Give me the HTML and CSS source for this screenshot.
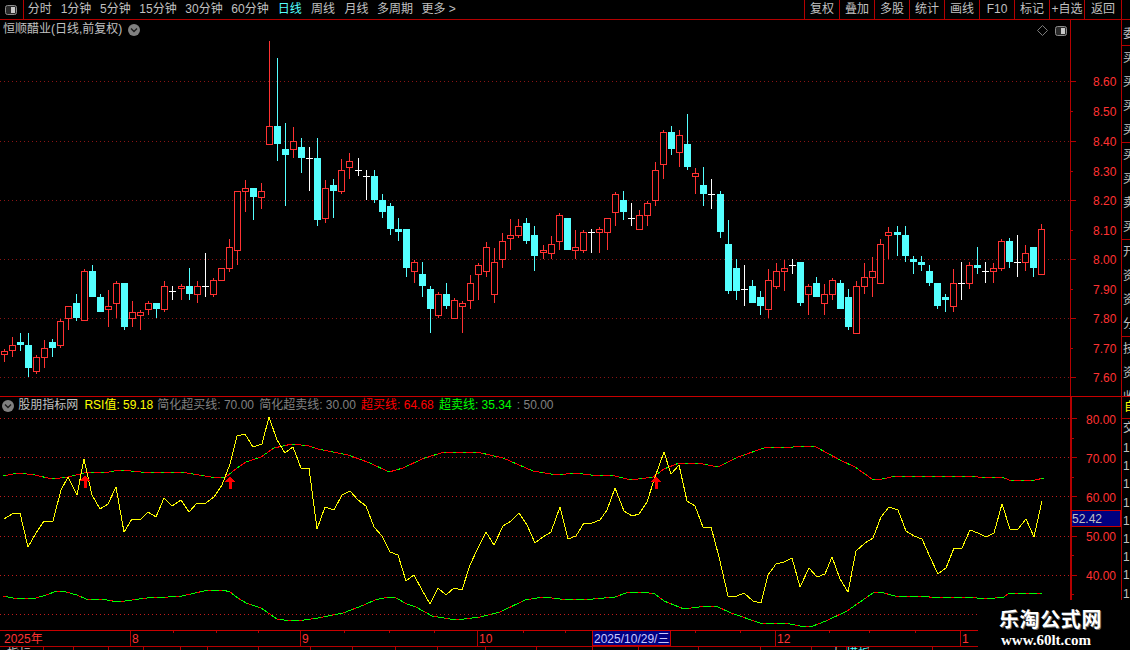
FILE: index.html
```html
<!DOCTYPE html>
<html lang="zh-CN">
<head>
<meta charset="utf-8">
<title>恒顺醋业 日线</title>
<link rel="stylesheet" href="styles.css">
</head>
<body>
<div class="app">
  <header class="toolbar">
    <div class="corner-btn">
      <svg class="layout-icon" viewBox="0 0 12 10"><rect class="layout-frame" x="0.5" y="0.5" width="11" height="9" rx="2"/><rect class="layout-bar" x="6" y="2" width="4" height="6"/></svg>
    </div>
    <nav class="tabs">
      <span class="tab tab-s">分时</span>
      <span class="tab tab-m">1分钟</span>
      <span class="tab tab-m">5分钟</span>
      <span class="tab tab-l">15分钟</span>
      <span class="tab tab-l">30分钟</span>
      <span class="tab tab-l">60分钟</span>
      <span class="tab tab-s tab-active">日线</span>
      <span class="tab tab-s">周线</span>
      <span class="tab tab-s">月线</span>
      <span class="tab tab-t">多周期</span>
      <span class="tab tab-t">更多 &gt;</span>
    </nav>
    <div class="actions">
      <span class="action">复权</span>
      <span class="action">叠加</span>
      <span class="action">多股</span>
      <span class="action">统计</span>
      <span class="action">画线</span>
      <span class="action">F10</span>
      <span class="action">标记</span>
      <span class="action">+自选</span>
      <span class="action action-last">返回</span>
    </div>
  </header>

  <main class="workspace">
    <div class="charts">
      <section class="panel panel-price">
        <div class="panel-title">
          <span>恒顺醋业(日线,前复权)</span>
          <svg class="chevron" viewBox="0 0 12 12"><circle class="chevron-disc" cx="6" cy="6" r="6"/><path class="chevron-mark" d="M3 4.5l3 3 3-3"/></svg>
        </div>
        <div class="panel-tools">
          <svg class="diamond" viewBox="0 0 11 11"><path d="M5.5 .5l5 5-5 5-5-5z"/></svg>
          <svg class="layout-icon" viewBox="0 0 12 10"><rect class="layout-frame" x="0.5" y="0.5" width="11" height="9" rx="2"/><rect class="layout-bar" x="6" y="2" width="4" height="6"/></svg>
        </div>
        <svg id="priceChart" class="chart chart-price" viewBox="0 20 1121 376">
          <g id="priceGrid"></g>
          <g id="candles"></g>
          <g class="axis-labels">
            <text x="1093" y="86">8.60</text>
            <text x="1093" y="116">8.50</text>
            <text x="1093" y="146">8.40</text>
            <text x="1093" y="176">8.30</text>
            <text x="1093" y="205">8.20</text>
            <text x="1093" y="235">8.10</text>
            <text x="1093" y="264">8.00</text>
            <text x="1093" y="294">7.90</text>
            <text x="1093" y="323">7.80</text>
            <text x="1093" y="353">7.70</text>
            <text x="1093" y="382">7.60</text>
          </g>
        </svg>
      </section>

      <section class="panel panel-rsi">
        <div class="legend">
          <svg class="chevron" viewBox="0 0 12 12"><circle class="chevron-disc" cx="6" cy="6" r="6"/><path class="chevron-mark" d="M3 4.5l3 3 3-3"/></svg>
          <span class="legend-name">股朋指标网</span>
          <span class="lg-yellow">RSI值: 59.18</span>
          <span class="lg-grey">简化超买线: 70.00</span>
          <span class="lg-grey">简化超卖线: 30.00</span>
          <span class="lg-red">超买线: 64.68</span>
          <span class="lg-green">超卖线: 35.34</span>
          <span class="lg-grey">: 50.00</span>
        </div>
        <svg id="rsiChart" class="chart chart-rsi" viewBox="0 397 1121 233">
          <g id="rsiGrid"></g>
          <g id="rsiLines"></g>
          <g class="axis-labels">
            <text x="1086" y="424">80.00</text>
            <text x="1086" y="463">70.00</text>
            <text x="1086" y="502">60.00</text>
            <text x="1086" y="541">50.00</text>
            <text x="1086" y="580">40.00</text>
          </g>
          <rect class="cursor-box" x="1071.5" y="510.5" width="49" height="16"/>
          <text class="cursor-text" x="1072" y="523">52.42</text>
        </svg>
      </section>

      <svg id="dateAxis" class="chart chart-date" viewBox="0 631 1121 19">
        <g id="dateTicks"></g>
        <g class="date-labels">
          <text x="4" y="643">2025年</text>
          <text x="132" y="643">8</text>
          <text x="302" y="643">9</text>
          <text x="479" y="643">10</text>
          <text x="777" y="643">12</text>
          <text x="962" y="643">1</text>
        </g>
        <rect class="date-cursor" x="592.5" y="630.5" width="78" height="15"/>
        <text class="date-cursor-text" x="594" y="643">2025/10/29/三</text>
        <text class="tabs-clipped" x="7" y="658">指标</text>
        <text class="tabs-clipped" x="830" y="658">大</text>
        <text class="tabs-clipped tabs-clipped-on" x="846" y="658">模板</text>
      </svg>
    </div>

    <aside class="side">
      <div class="side-group side-one"><span>委</span></div>
      <div class="side-group"><span>买</span><span>买</span><span>买</span><span>买</span></div>
      <div class="side-group"><span>买</span><span>买</span><span>卖</span><span>买</span></div>
      <div class="side-group"><span>开</span><span>资</span><span>资</span><span>分</span></div>
      <div class="side-group side-three"><span>技</span><span>资</span><span>收</span></div>
      <div class="side-flag">自</div>
      <div class="side-char">交</div>
      <div class="side-nums">
        <span>1</span><span>1</span><span>1</span><span>1</span><span>1</span><span>1</span><span>1</span><span>1</span><span>1</span>
      </div>
    </aside>
  </main>

  <div class="watermark">
    <div class="wm-name">乐淘公式网</div>
    <div class="wm-url">www.60lt.com</div>
  </div>
</div>
<script src="app.js"></script>
</body>
</html>
```
FILE: styles.css
```css
* { box-sizing: border-box; }
html, body { margin: 0; padding: 0; background: #000; }
body { font-family: "Liberation Sans", "Noto Sans CJK SC", sans-serif; font-size: 12px; color: #c0c0c0; }

.app { position: relative; width: 1130px; height: 650px; overflow: hidden; background: #000; display: flex; flex-direction: column; }

/* toolbar */
.toolbar { flex: none; height: 20px; display: flex; border-bottom: 1px solid #b40000; line-height: 18px; white-space: nowrap; }
.corner-btn { width: 24px; height: 19px; border-right: 1px solid #b40000; display: flex; align-items: center; justify-content: center; padding-right: 1px; }
.layout-icon { width: 12px; height: 10px; display: block; }
.layout-frame { fill: #2a2a2a; stroke: #8c8c8c; }
.layout-bar { fill: #c8c8c8; }
.tabs { display: flex; margin-left: -1px; }
.tab { text-align: center; }
.tab-s { width: 33.4px; }
.tab-m { width: 39.3px; }
.tab-l { width: 46px; }
.tab-t { width: 43.6px; }
.tab-active { color: #54ffff; }
.actions { margin-left: auto; display: flex; padding-right: 8px; }
.action { width: 35px; text-align: center; border-left: 1px solid #b40000; }
.action-last { width: 38px; border-right: 1px solid #b40000; }

/* layout */
.workspace { flex: 1; min-height: 0; display: flex; }
.charts { width: 1121px; flex: none; display: flex; flex-direction: column; }
.panel { position: relative; }
.panel-price { height: 377px; border-bottom: 1px solid #c80000; }
.panel-rsi { height: 234px; border-bottom: 1px solid #c80000; }
.chart { display: block; width: 1121px; }
.chart-price { height: 376px; }
.chart-rsi { height: 233px; }
.chart-date { height: 19px; }

/* overlays on the charts */
.panel-title { position: absolute; left: 3px; top: 1px; height: 17px; display: flex; align-items: center; gap: 6px; line-height: 17px; white-space: nowrap; }
.panel-tools { position: absolute; left: 1037px; top: 5px; display: flex; align-items: center; gap: 7px; }
.diamond { width: 11px; height: 11px; display: block; }
.diamond path { fill: none; stroke: #7c7c7c; }
.chevron { width: 12px; height: 12px; flex: none; display: block; }
.chevron-disc { fill: #808080; }
.chevron-mark { fill: none; stroke: #1c1c1c; stroke-width: 1.4; }
.legend { position: absolute; left: 2px; top: 0; height: 17px; display: flex; align-items: center; gap: 5.2px; line-height: 17px; white-space: pre; }
.legend-name { margin-left: -1px; margin-right: 1px; }
.lg-yellow { color: #ffff00; margin-right: -1px; }
.lg-grey { color: #808080; }
.lg-red { color: #ff0000; }
.lg-green { color: #00ff00; }

/* svg contents */
.axis-labels text, .date-labels text { fill: #ff3232; font-size: 12px; }
.cursor-box { fill: #000080; stroke: #c80000; shape-rendering: crispEdges; }
.cursor-text { fill: #c0c0c0; font-size: 12px; }
.date-cursor { fill: #000080; stroke: #c80000; shape-rendering: crispEdges; }
.date-cursor-text { fill: #c8c8ff; font-size: 12px; }
.tabs-clipped { fill: #c0c0c0; font-size: 12px; }
.tabs-clipped-on { fill: #54ffff; }
.line { fill: none; stroke-width: 1; shape-rendering: crispEdges; }
.crisp { shape-rendering: crispEdges; fill: none; stroke-width: 1; }
.dots-price { stroke: #8a1414; stroke-dasharray: 1 3; }
.dots-rsi { stroke: #c01c1c; stroke-dasharray: 1 3; }
.axis-line { stroke: #b40000; }
.axis-line-2 { stroke: #b40000; stroke-width: 2; }
.wick-red, .body-red { stroke: #ff3232; }
.body-red { fill: #000; }
.wick-cyan { stroke: #54ffff; }
.body-cyan { fill: #54ffff; }
.wick-white { stroke: #fff; }
.rsi-yellow { stroke: #ffff00; }
.upper-base, .lower-over { stroke: #ff0000; }
.upper-over, .lower-base { stroke: #00ff00; }
.upper-over { stroke-dasharray: 3 7; }
.lower-over { stroke-dasharray: 3 8; }
.arrow { fill: #ff0000; }

/* clipped right-hand column */
.side { width: 9px; flex: none; border-left: 1px solid #b40000; display: flex; flex-direction: column; overflow: hidden; line-height: 24px; }
.side-group { height: 97px; border-bottom: 1px solid #b40000; display: flex; flex-direction: column; padding-left: 1px; white-space: nowrap; overflow: hidden; }
.side-group span { height: 24px; flex: none; }
.side-one { height: 26px; padding-top: 2px; }
.side-three { height: 60px; border-bottom-color: #c80000; }
.side-flag { height: 22px; line-height: 21px; color: #ffff00; padding-left: 2px; border-bottom: 1px solid #b40000; }
.side-char { height: 20px; line-height: 18px; padding-left: 1px; }
.side-nums { display: flex; flex-direction: column; padding-left: 1px; line-height: 18.2px; }
.side-nums span { height: 18.2px; }

/* watermark sits over the chart corner */
.watermark { position: absolute; left: 978px; top: 600px; width: 152px; height: 50px; background: #000; }
.wm-name { margin: 6px 0 0 21px; font-family: "Noto Sans CJK SC", sans-serif; font-weight: 700; font-size: 20px; line-height: 26px; letter-spacing: .6px; color: #fff; text-shadow: 1px 1px 0 #666; white-space: nowrap; }
.wm-url { margin: 0 0 0 23px; font-family: "Liberation Serif", serif; font-weight: 700; font-size: 15px; line-height: 16px; color: #fff; white-space: nowrap; }
```
FILE: app.js
```js
var NS = "http://www.w3.org/2000/svg";
function el(parent, tag, cls, attrs) {
  var n = document.createElementNS(NS, tag);
  if (cls) n.setAttribute("class", cls);
  for (var k in attrs) n.setAttribute(k, attrs[k]);
  parent.appendChild(n);
  return n;
}
function hline(g, cls, y, x1, x2) { el(g, "path", "crisp " + cls, { d: "M" + x1 + " " + (y + .5) + "H" + x2 }); }

/* price panel: x, wick top, wick bottom, body top, body bottom, kind */
var K = [
[4,349,362,351,355,"r"],[12,337,357,345,351,"r"],[20,333,351,342,345,"c"],[28,333,377,345,368,"c"],
[36,355,374,357,372,"r"],[44,340,368,348,358,"r"],[52,339,357,342,348,"c"],[60,319,348,321,346,"r"],
[68,306,330,306,319,"r"],[76,294,321,303,318,"c"],[84,269,321,271,321,"r"],[92,265,297,271,297,"c"],
[100,294,312,297,312,"c"],[108,290,327,306,310,"r"],[116,281,318,283,304,"r"],[124,283,330,283,327,"c"],
[132,301,327,312,319,"r"],[140,310,330,312,316,"r"],[148,301,315,303,310,"r"],[156,303,318,303,309,"c"],
[164,281,312,286,310,"r"],[172,286,300,291,291,"w"],[181,284,300,286,289,"r"],[189,268,300,286,294,"c"],
[197,281,303,286,295,"r"],[205,253,297,286,286,"w"],[213,278,297,280,295,"r"],[221,268,281,268,281,"r"],
[229,239,272,247,269,"r"],[237,191,265,191,251,"r"],[245,180,212,188,192,"r"],[253,188,220,188,197,"c"],
[261,183,209,191,198,"r"],[269,41,145,126,145,"r"],[277,58,161,126,144,"c"],[285,123,206,149,155,"c"],
[293,127,158,141,150,"r"],[301,138,173,147,158,"c"],[309,147,191,158,158,"w"],[317,138,226,158,220,"c"],
[325,180,223,188,219,"r"],[333,179,218,185,191,"c"],[341,159,194,170,192,"r"],[349,153,179,161,168,"r"],
[358,158,176,170,170,"w"],[366,170,200,176,176,"w"],[374,170,203,176,200,"c"],[382,194,218,200,212,"c"],
[390,203,235,206,229,"c"],[398,218,241,229,232,"c"],[406,229,277,229,268,"c"],[414,260,283,262,272,"r"],
[422,262,297,274,286,"c"],[430,286,333,289,309,"c"],[438,292,318,294,316,"r"],[446,283,309,294,306,"c"],
[454,298,319,300,319,"r"],[462,301,333,303,307,"r"],[470,275,309,283,301,"r"],[478,263,300,265,275,"r"],
[486,242,277,247,272,"r"],[494,248,303,262,295,"r"],[502,233,268,241,260,"r"],[510,219,250,235,239,"r"],
[518,219,238,226,236,"r"],[526,218,244,223,241,"c"],[534,226,271,235,256,"c"],[543,245,259,250,253,"r"],
[551,236,259,244,254,"r"],[559,213,250,215,242,"r"],[567,218,250,218,250,"c"],[575,230,259,247,251,"r"],
[583,230,253,232,251,"r"],[591,229,253,232,232,"w"],[599,227,253,229,233,"r"],[607,218,250,218,233,"r"],
[615,192,226,194,213,"r"],[623,191,220,200,212,"c"],[631,203,226,218,218,"w"],[639,210,230,215,230,"r"],
[647,201,226,203,216,"r"],[655,162,206,170,201,"r"],[663,130,179,132,165,"r"],[671,126,155,132,149,"c"],
[679,130,167,135,153,"r"],[687,114,170,144,167,"c"],[695,168,194,173,177,"r"],[703,167,206,185,194,"c"],
[711,179,209,194,194,"w"],[720,191,238,194,232,"c"],[728,220,294,244,291,"c"],[736,259,300,268,291,"c"],
[744,265,306,289,289,"w"],[752,280,303,286,303,"c"],[760,291,315,297,306,"c"],[768,269,318,280,310,"r"],
[776,263,289,271,287,"r"],[784,260,291,268,272,"r"],[792,259,274,265,265,"w"],[800,262,306,262,303,"c"],
[808,284,315,286,295,"r"],[816,277,297,283,297,"c"],[824,284,315,294,304,"r"],[832,278,300,280,295,"r"],
[840,280,309,283,309,"c"],[848,289,330,297,327,"c"],[856,281,334,286,334,"r"],[864,263,294,277,287,"r"],
[872,257,297,271,278,"r"],[880,239,284,244,284,"r"],[888,227,259,232,236,"r"],[897,226,256,232,235,"c"],
[905,226,262,235,256,"c"],[913,256,274,259,262,"c"],[921,256,271,262,265,"c"],[929,265,286,271,283,"c"],
[937,283,309,283,306,"c"],[945,294,312,297,300,"c"],[953,269,312,283,307,"r"],[961,262,300,283,283,"w"],
[969,262,289,265,284,"r"],[977,247,274,265,268,"c"],[985,262,283,271,271,"w"],[993,263,283,268,272,"r"],
[1001,239,271,241,269,"r"],[1009,238,268,241,262,"c"],[1017,235,277,262,262,"w"],[1025,245,271,253,263,"r"],
[1033,247,277,247,268,"c"],[1041,224,274,229,275,"r"]
];

var priceGrid = document.getElementById("priceGrid");
[81, 141, 200, 259, 318, 377].forEach(function (y) { hline(priceGrid, "dots-price", y, 0, 1070); });
el(priceGrid, "path", "crisp axis-line", { d: "M1070.5 20V396" });
[81, 111, 141, 171, 200, 230, 259, 289, 318, 348, 377].forEach(function (y, i) {
  hline(priceGrid, "axis-line", y, 1071, i % 2 ? 1073 : 1076);
});

var wr = "", wc = "", ww = "", br = "", bc = "";
K.forEach(function (k) {
  var x = k[0], cx = x + .5, top = k[1], bot = k[2], bt = k[3], bb = k[4], t = k[5];
  if (t === "w") {
    ww += "M" + cx + " " + top + "V" + bot + "M" + (x - 3) + " " + (bt + .5) + "H" + (x + 4);
    return;
  }
  var seg = "";
  if (top < bt) seg += "M" + cx + " " + top + "V" + bt;
  if (bot > bb) seg += "M" + cx + " " + bb + "V" + bot;
  if (t === "r") {
    wr += seg;
    br += "M" + (x - 2.5) + " " + (bt + .5) + "h6v" + (bb - bt - 1) + "h-6z";
  } else {
    wc += seg;
    bc += "M" + (x - 3) + " " + bt + "h7v" + (bb - bt) + "h-7z";
  }
});
var cg = document.getElementById("candles");
el(cg, "path", "crisp wick-red", { d: wr });
el(cg, "path", "crisp wick-cyan", { d: wc });
el(cg, "path", "crisp wick-white", { d: ww });
el(cg, "path", "crisp body-red", { d: br });
el(cg, "path", "body-cyan", { d: bc, "shape-rendering": "crispEdges" });

/* RSI panel */
var rsiGrid = document.getElementById("rsiGrid");
[418, 457, 496, 536, 575, 614].forEach(function (y) { hline(rsiGrid, "dots-rsi", y, 0, 1070); });
el(rsiGrid, "path", "crisp axis-line-2", { d: "M1071 397V630" });
[418, 438, 457, 477, 496, 516, 536, 555, 575, 594].forEach(function (y, i) {
  hline(rsiGrid, "axis-line", y, 1072, i % 2 ? 1074 : 1077);
});

var yellow = "4,519 12,514 20,513 28,547 36,533 44,521 53,521 61,490 68,477 77,495 84,459 92,495 100,509 108,504 116,487 124,532 132,519 141,519 148,512 156,517 164,498 172,506 181,500 189,512 197,503 206,503 214,497 222,485 230,464 237,436 245,434 253,447 262,444 269,417 277,440 285,453 293,447 301,468 309,468 317,529 325,507 334,510 342,495 350,491 358,500 366,506 374,527 382,536 390,552 398,555 406,581 414,575 422,590 430,604 438,588 446,595 454,588 462,590 470,565 478,548 486,532 494,545 503,526 511,521 519,513 527,525 535,543 543,537 551,532 560,507 568,539 576,536 584,523 592,523 600,520 607,510 615,488 624,511 632,516 639,514 647,502 655,477 664,452 671,474 679,465 687,501 695,506 703,527 711,527 719,557 728,596 737,596 744,593 753,601 761,603 768,575 776,564 784,562 792,558 800,587 809,568 817,577 825,574 832,557 840,579 848,592 856,551 865,543 873,538 881,517 889,507 898,510 906,531 914,536 922,539 930,557 938,574 946,568 954,548 962,548 970,530 978,533 986,537 994,533 1002,504 1010,529 1018,529 1026,519 1034,537 1042,501";
var upper = "3,476 18,473 35,475 52,479 68,477 84,473 109,472 120,470 141,472 181,472 211,477 226,477 237,468 246,462 261,457 274,448 292,444 309,446 318,449 348,455 370,463 389,472 403,468 422,459 444,452 466,452 481,453 503,458 533,471 551,474 566,474 574,473 591,475 615,476 631,480 653,477 664,469 679,463 698,463 713,466 720,466 738,457 767,447 793,447 807,446 816,447 840,460 855,467 872,479 882,479 896,476 916,476 924,476 947,476 955,476 978,477 1002,477 1009,480 1035,480 1044,478";
var lower = "3,596 13,598 25,599 36,598 46,595 57,591 66,592 77,595 86,599 107,600 118,602 132,600 154,597 168,597 182,596 204,591 223,590 230,592 238,598 246,603 261,608 277,619 284,620 304,620 318,618 343,613 364,605 375,600 388,597 396,598 407,604 416,607 432,616 450,619 464,619 480,617 500,612 525,600 543,597 560,599 593,599 615,597 626,593 642,592 655,594 664,601 684,609 706,606 716,606 731,613 760,623 785,623 800,626 813,626 826,621 847,611 860,602 873,593 880,592 895,596 904,597 924,596 935,598 967,597 986,599 1004,597 1009,593 1042,593";

var lg = document.getElementById("rsiLines");
el(lg, "polyline", "line upper-base", { points: upper });
el(lg, "polyline", "line upper-over", { points: upper });
el(lg, "polyline", "line lower-base", { points: lower });
el(lg, "polyline", "line lower-over", { points: lower });
el(lg, "polyline", "line rsi-yellow", { points: yellow });
[[85, 475], [230, 476], [656, 476]].forEach(function (a) {
  el(lg, "path", "arrow", {
    d: "M" + a[0] + " " + a[1] + "l5 6h-3.5v7h-3v-7h-3.5z",
    "shape-rendering": "crispEdges"
  });
});

/* date axis */
var dt = document.getElementById("dateTicks");
hline(dt, "axis-line", 646, 0, 1121);
[173, 216, 258, 344, 389, 434, 523, 565, 695, 740, 829, 869, 915].forEach(function (x) {
  el(dt, "path", "crisp axis-line", { d: "M" + (x + .5) + " 631V633" });
});
[130, 300, 477, 775, 960].forEach(function (x) {
  el(dt, "path", "crisp axis-line", { d: "M" + (x + .5) + " 631V646" });
});
[43, 73, 108, 143, 180, 207, 258, 310, 352, 395, 437, 485, 536, 592, 638, 698, 760, 811, 846, 868, 932].forEach(function (x) {
  el(dt, "path", "crisp axis-line", { d: "M" + (x + .5) + " 647V650" });
});
```
